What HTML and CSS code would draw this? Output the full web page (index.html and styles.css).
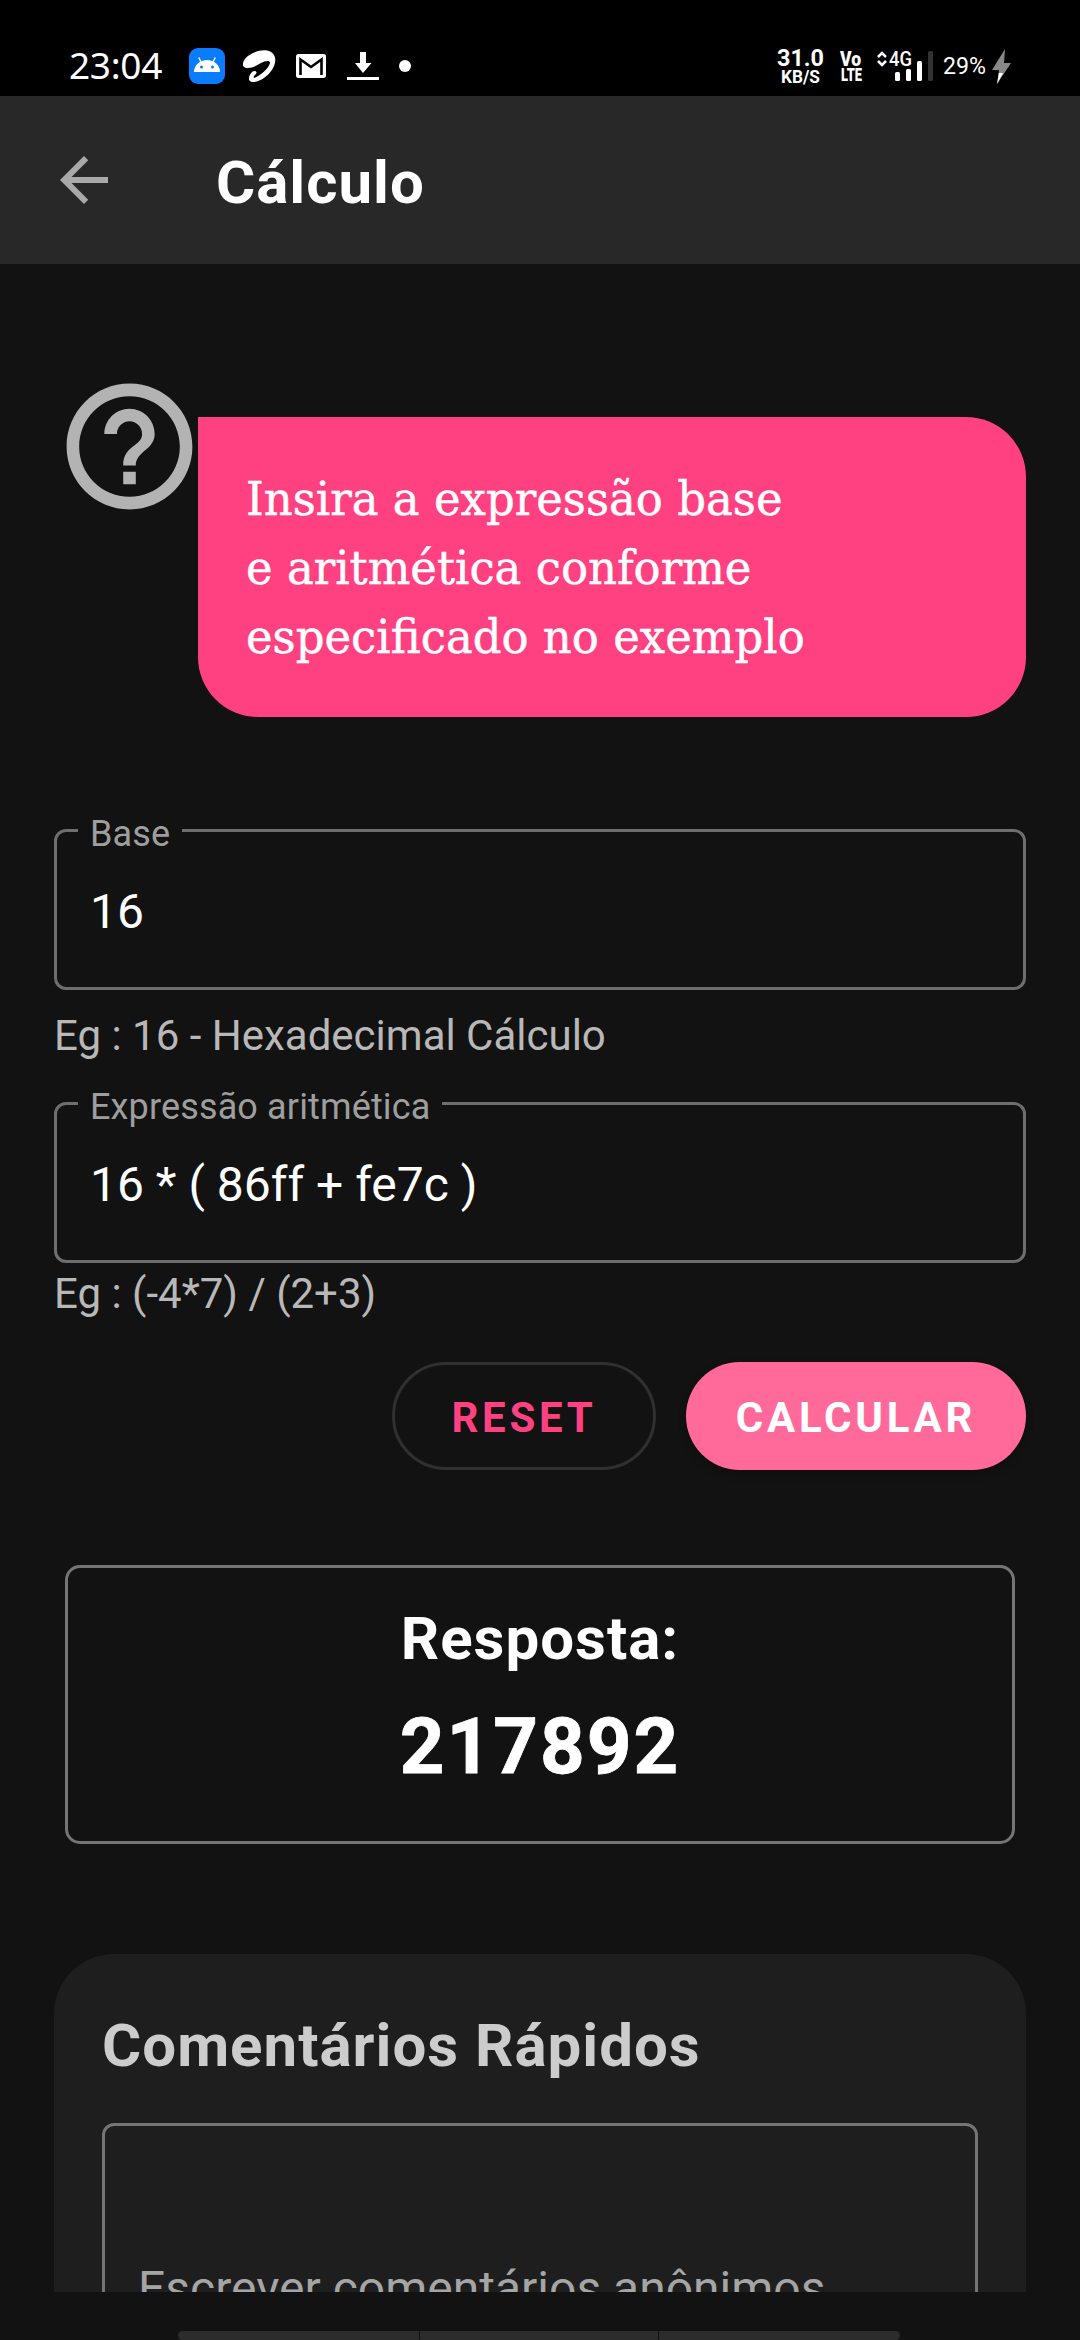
FILE: index.html
```html
<!DOCTYPE html>
<html lang="pt">
<head>
<meta charset="utf-8">
<title>Cálculo</title>
<link rel="stylesheet" href="styles.css">
</head>
<body>
<div class="screen">
  <header class="status">
    <div class="status-left">
      <span class="clock">23:04</span>
      <svg class="ic-android" width="36" height="36" viewBox="0 0 36 36"><rect width="36" height="36" rx="9" fill="#0a7cff"/><path d="M5 24a13 12 0 0 1 26 0z" fill="#fff"/><path d="M12.500 15L9.700 9.500M23.500 15l2.800-5.500" stroke="#fff" stroke-width="1.500"/><circle cx="12.500" cy="19" r="1.500" fill="#0a7cff"/><circle cx="23.500" cy="19" r="1.500" fill="#0a7cff"/></svg>
      <svg class="ic-swirl" width="33" height="33" viewBox="0 0 33 33"><path d="M0 13C2 5 15-1 24 .5C32 2 34 9 31 16C28 24 17 33 9 32C4 31 6 25 9 22C11 20 14 21 13.500 23C12.500 25 10 26 11 28C17 26 26 18 27 13C27 10 22 11 18 13C13 16 9 18 5 18C1 18-1 16 0 13z" fill="#fff"/></svg>
      <svg class="ic-mail" width="30" height="24" viewBox="0 0 30 24"><rect width="30" height="24" rx="2.500" fill="#fff"/><path d="M4.500 21V5.500L15 13l10.500-7.500V21" fill="none" stroke="#000" stroke-width="2.600"/></svg>
      <svg class="ic-down" width="32" height="28" viewBox="0 0 32 28"><path d="M13 0h6v11h5.500L16 21 8 11h5zM0 25h32v3H0z" fill="#fff"/></svg>
      <span class="dot"></span>
    </div>
    <svg class="status-right" width="240" height="56" viewBox="775 36 240 56">
      <g fill="#fff" class="status-text">
        <text x="777" y="66" font-size="24.500" font-weight="700" textLength="47" lengthAdjust="spacingAndGlyphs">31.0</text>
        <text x="781" y="83" font-size="17.500" font-weight="700" textLength="39" lengthAdjust="spacingAndGlyphs">KB/S</text>
        <text x="840" y="66" font-size="20" font-weight="900" textLength="21" lengthAdjust="spacingAndGlyphs">Vo</text>
        <text x="841" y="81" font-size="18.500" font-weight="900" textLength="21" lengthAdjust="spacingAndGlyphs">LTE</text>
        <text x="889" y="66" font-size="20" font-weight="500" textLength="23" lengthAdjust="spacingAndGlyphs">4G</text>
        <text x="943" y="74" font-size="24" textLength="43" lengthAdjust="spacingAndGlyphs">29%</text>
      </g>
      <path d="M878 57l4-4 4 4M878 61l4 4 4-4" fill="none" stroke="#fff" stroke-width="2.500"/>
      <g fill="#fff"><rect x="895" y="72" width="5" height="9" rx="1.500"/><rect x="906" y="69" width="5" height="12" rx="1.500"/><rect x="917" y="61" width="5" height="20" rx="1.500"/><rect x="928" y="51" width="5" height="30" rx="1.500" fill="#333"/></g>
      <path d="M1005 49l-13 21h7l-2 14 14-21h-7z" fill="#888"/><path d="M999 73h4l-6 11z" fill="#fff"/>
    </svg>
  </header>

  <nav class="appbar">
    <svg class="back" width="72" height="72" viewBox="0 0 24 24"><path d="M20 11H7.830l5.590-5.590L12 4l-8 8 8 8 1.410-1.410L7.830 13H20v-2z" fill="#a9a9a9"/></svg>
    <h1>Cálculo</h1>
  </nav>

  <main class="content">
    <section class="intro">
      <svg class="help" width="151" height="151" viewBox="0 0 24 24"><path d="M11 18h2v-2h-2v2zm1-16C6.480 2 2 6.480 2 12s4.480 10 10 10 10-4.480 10-10S17.520 2 12 2zm0 18c-4.410 0-8-3.590-8-8s3.590-8 8-8 8 3.590 8 8-3.590 8-8 8zm0-14c-2.210 0-4 1.790-4 4h2c0-1.100.9-2 2-2s2 .9 2 2c0 2-3 1.750-3 5h2c0-2.250 3-2.500 3-5 0-2.210-1.790-4-4-4z" fill="#b3b3b3"/></svg>
      <div class="bubble"><p>Insira a expressão base<br>e aritmética conforme<br>especificado no exemplo</p></div>
    </section>

    <div class="field"><span class="label">Base</span><span class="value">16</span></div>
    <p class="hint hint-base">Eg : 16 - Hexadecimal Cálculo</p>
    <div class="field"><span class="label">Expressão aritmética</span><span class="value">16 * ( 86ff + fe7c )</span></div>
    <p class="hint hint-expr">Eg : (-4*7) / (2+3)</p>

    <div class="actions">
      <button class="btn reset">RESET</button>
      <button class="btn calc">CALCULAR</button>
    </div>

    <section class="answer">
      <h2>Resposta:</h2>
      <strong>217892</strong>
    </section>

    <section class="comments">
      <h2>Comentários Rápidos</h2>
      <div class="comment-box">Escrever comentários anônimos</div>
    </section>
  </main>

  <footer class="bottom">
    <div class="tabs"><i></i><i></i><i></i></div>
  </footer>
</div>
</body>
</html>
```
FILE: styles.css
```css
* { box-sizing: border-box; margin: 0; padding: 0; }
body { background: #121212; font-family: Roboto, sans-serif; color: #fff; }
.screen { width: 1080px; height: 2340px; display: flex; flex-direction: column; overflow: hidden; background: #121212; }

.status { flex: none; height: 96px; background: #000; display: flex; justify-content: space-between; padding: 36px 65px 0 69px; }
.status-left { display: flex; align-items: center; height: 60px; }
.clock { font-family: "Noto Sans", sans-serif; font-size: 37px; line-height: 50px; width: 120px; margin-top: -3px; letter-spacing: -0.300px; }
.ic-swirl { margin-left: 18px; }
.ic-mail { margin-left: 20px; }
.ic-down { margin-left: 21px; }
.dot { width: 12px; height: 12px; border-radius: 50%; background: #fff; margin-left: 20px; }
.status-right { overflow: visible; }
.status-text { font-family: Roboto, sans-serif; }

.appbar { flex: none; height: 168px; background: #282828; display: flex; align-items: center; padding-left: 48px; }
.appbar h1 { font-size: 60px; line-height: 70px; margin: 5px 0 0 96px; letter-spacing: 1px; }
.back { display: block; }

.content { flex: none; height: 2028px; padding: 107px 54px 0; overflow: hidden; }
.intro { display: flex; align-items: flex-start; height: 346px; }
.help { flex: none; margin-right: -7px; }
.bubble { flex: 1; height: 300px; margin-top: 46px; background: #ff4081; border-radius: 0 60px 60px 60px; padding: 47px 0 0 48px; }
.bubble p { font-family: "Roboto Slab", "DejaVu Serif", serif; font-size: 47px; line-height: 69px; white-space: nowrap; transform: scaleX(0.957); transform-origin: left; -webkit-text-stroke: 0.500px #fff; }

.field { position: relative; height: 161px; border: 3px solid #6e6e6e; border-radius: 12px; padding: 52px 33px 0; }
.intro + .field { margin-top: 112px; }
.label { position: absolute; left: 21px; top: -19px; padding: 0 12px; background: #121212; color: #9e9e9e; font-size: 36px; line-height: 42px; letter-spacing: 0.140px; }
.value { display: block; font-size: 48px; line-height: 56px; white-space: pre; }
.hint { font-size: 42px; line-height: 50px; color: #b8b8b8; }
.hint-base { margin: 21px 0 41px; }
.hint-expr { margin: 6px 0 43px; }

.actions { display: flex; justify-content: flex-end; gap: 30px; }
.btn { height: 108px; border: 0; border-radius: 54px; font-family: inherit; font-weight: 700; font-size: 42px; letter-spacing: 3.750px; color: #fff; padding-top: 3px; }
.reset { width: 264px; background: transparent; border: 3px solid #303030; color: #ff4081; }
.calc { width: 340px; background: #ff6a9b; box-shadow: 0 4px 9px rgba(0, 0, 0, 0.200); }

.answer { margin: 95px 11px 0; height: 279px; border: 3px solid #757575; border-radius: 15px; padding-top: 36px; text-align: center; display: flex; flex-direction: column; gap: 28px; }
.answer h2 { font-size: 60px; line-height: 70px; letter-spacing: 1px; }
.answer strong { font-size: 78px; line-height: 90px; letter-spacing: 2px; -webkit-text-stroke: 0.800px #fff; }

.comments { margin-top: 110px; height: 420px; background: #1e1e1e; border-radius: 60px; padding: 57px 48px 0; }
.comments h2 { font-size: 60px; line-height: 70px; color: #ccc; letter-spacing: 1px; }
.comment-box { margin-top: 42px; height: 300px; border: 3px solid #757575; border-radius: 12px; padding: 135px 33px 0; font-size: 48px; line-height: 56px; color: #a5a5a5; white-space: nowrap; }

.bottom { flex: none; height: 48px; display: flex; align-items: flex-end; padding-left: 178px; }
.tabs { display: grid; grid-template-columns: 241px 238px 241px; gap: 1px; width: 722px; height: 9px; border-radius: 5px; overflow: hidden; }
.tabs i { background: #2c2c2c; }
```
